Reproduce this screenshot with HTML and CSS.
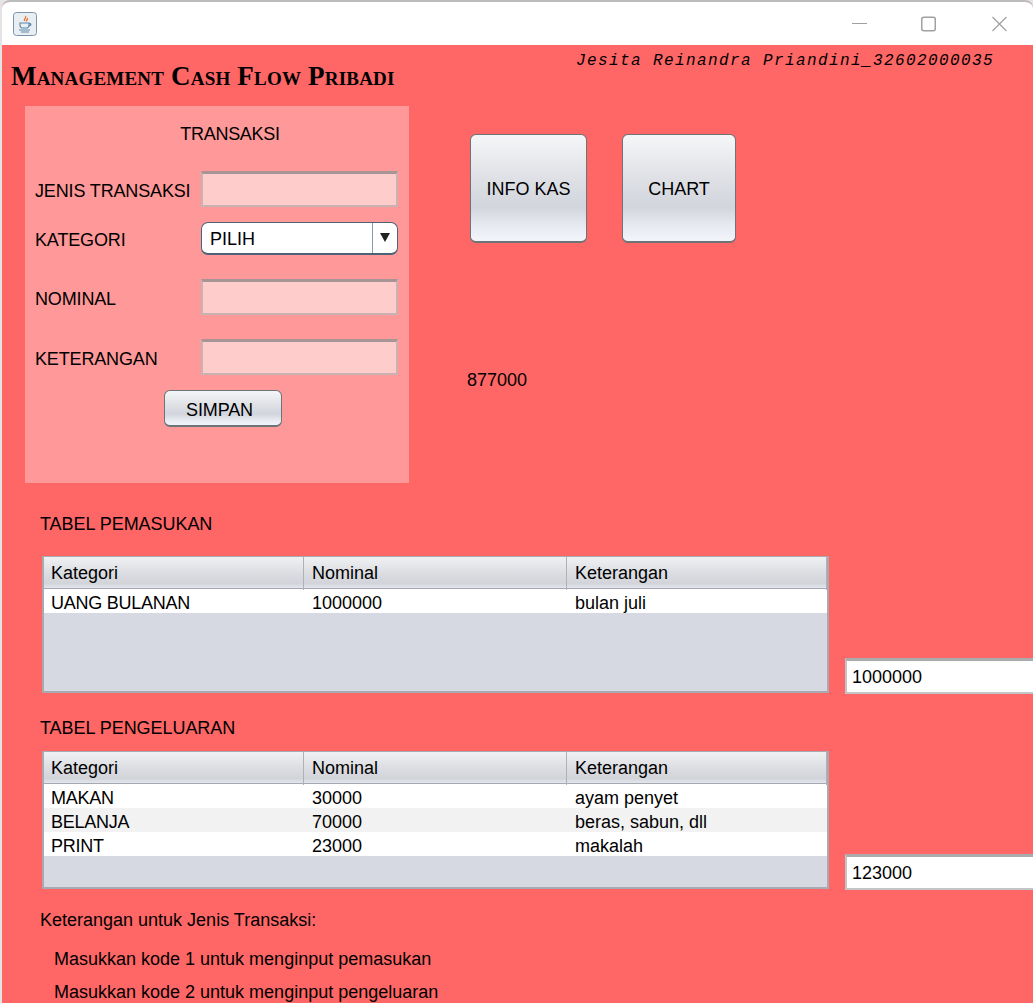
FILE: index.html
```html
<!DOCTYPE html>
<html lang="id">
<head>
<meta charset="utf-8">
<title>Management Cash Flow Pribadi</title>
<link rel="stylesheet" href="styles.css">
</head>
<body>
<div class="window">
  <div class="titlebar">
    <div class="app-icon">
      <svg width="24" height="24" viewBox="0 0 24 24">
        <rect x="0.5" y="0.5" width="23" height="23" rx="3" fill="#e9eef3" stroke="#7d95ab"/>
        <path d="M12.500 4c1.500 1.500-2 3-1 5M14.500 6c.5 1.500-1.500 2-1 3.500" fill="none" stroke="#e8762c" stroke-width="1.300"/>
        <path d="M7 11h9v2.500c0 1.500-1.500 2.500-2.500 2.500h-4c-1 0-2.500-1-2.500-2.500zM16 11.500c2.500-.5 2.500 2.500 0 2.500" fill="none" stroke="#5f87aa" stroke-width="1.200"/>
        <path d="M6 18h11M8 20h8" stroke="#5f87aa" stroke-width="1.200"/>
      </svg>
    </div>
    <div class="window-controls">
      <svg width="15" height="16" viewBox="0 0 15 16"><path d="M0 7.500h15" stroke="#a0a0a0" stroke-width="1"/></svg>
      <svg width="15" height="16" viewBox="0 0 15 16"><rect x="0.750" y="1.250" width="13.500" height="13.500" rx="2" fill="none" stroke="#a0a0a0" stroke-width="1.500"/></svg>
      <svg class="ctl-close" width="15" height="16" viewBox="0 0 15 16"><path d="M.5 1l14 14M14.500 1L.5 15" stroke="#a0a0a0" stroke-width="1.200"/></svg>
    </div>
  </div>

  <main class="content">
    <header class="page-head">
      <h1 class="page-title">Management Cash Flow Pribadi</h1>
      <div class="author">Jesita Reinandra Priandini_32602000035</div>
    </header>

    <div class="top-row">
      <section class="panel">
        <div class="panel-title">TRANSAKSI</div>
        <div class="form-row row-a"><span class="form-label">JENIS TRANSAKSI</span><div class="field"></div></div>
        <div class="form-row row-b"><span class="form-label">KATEGORI</span>
          <div class="combo"><span class="combo-value">PILIH</span><span class="combo-arrow"></span></div>
        </div>
        <div class="form-row row-c"><span class="form-label">NOMINAL</span><div class="field"></div></div>
        <div class="form-row row-c"><span class="form-label">KETERANGAN</span><div class="field"></div></div>
        <div class="btn btn-save">SIMPAN</div>
      </section>

      <div class="actions">
        <div class="action-buttons">
          <div class="btn btn-info">INFO KAS</div>
          <div class="btn btn-chart">CHART</div>
        </div>
        <div class="balance">877000</div>
      </div>
    </div>

    <div class="section-label label-in">TABEL PEMASUKAN</div>
    <div class="table-row">
      <div class="table-box box-in">
        <div class="t-head"><div>Kategori</div><div>Nominal</div><div>Keterangan</div></div>
        <div class="t-row"><div>UANG BULANAN</div><div>1000000</div><div>bulan juli</div></div>
      </div>
      <div class="total">1000000</div>
    </div>

    <div class="section-label label-out">TABEL PENGELUARAN</div>
    <div class="table-row">
      <div class="table-box box-out">
        <div class="t-head"><div>Kategori</div><div>Nominal</div><div>Keterangan</div></div>
        <div class="t-row"><div>MAKAN</div><div>30000</div><div>ayam penyet</div></div>
        <div class="t-row"><div>BELANJA</div><div>70000</div><div>beras, sabun, dll</div></div>
        <div class="t-row"><div>PRINT</div><div>23000</div><div>makalah</div></div>
      </div>
      <div class="total">123000</div>
    </div>

    <p class="note note-head">Keterangan untuk Jenis Transaksi:</p>
    <p class="note note-1">Masukkan kode 1 untuk menginput pemasukan</p>
    <p class="note note-2">Masukkan kode 2 untuk menginput pengeluaran</p>
  </main>
</div>
</body>
</html>
```

FILE: styles.css
```css
* { box-sizing: border-box; }

html, body {
  margin: 0;
  padding: 0;
  height: 1003px;
  overflow: hidden;
  background: #e4e4e4;
}

body {
  font-family: "Liberation Sans", Arial, sans-serif;
  font-size: 18px;
  line-height: 20px;
  color: #000;
}

.window {
  margin-left: 2px;
  height: 1003px;
  overflow: hidden;
  border-top: 2px solid #bcbcbc;
  border-radius: 8px 8px 0 0;
  background: #f66;
  display: flex;
  flex-direction: column;
}

.titlebar {
  height: 43px;
  flex: none;
  background: #fff;
  display: flex;
  align-items: center;
  justify-content: space-between;
  padding-left: 11px;
}

.app-icon { display: flex; }

.window-controls {
  display: flex;
  align-items: center;
  gap: 54px;
  padding-right: 26px;
}

.ctl-close { margin-left: 2px; }

.content {
  flex: 1;
  min-height: 0;
}

.page-head {
  height: 61px;
  display: flex;
  justify-content: space-between;
  align-items: flex-start;
  padding: 0 39px 0 9px;
}

.page-title {
  margin: 20px 0 0;
  font-family: "Liberation Serif", serif;
  font-variant: small-caps;
  font-weight: bold;
  font-size: 27px;
  letter-spacing: 0.2px;
  line-height: 22px;
}

.author {
  margin-top: 6px;
  font-family: "Liberation Mono", monospace;
  font-style: italic;
  font-size: 16px;
  letter-spacing: 1.400px;
  line-height: 20px;
}

.top-row { display: flex; align-items: flex-start; }

.panel {
  margin-left: 23px;
  width: 384px;
  height: 377px;
  background: #f99;
  padding-top: 18px;
}

.panel-title {
  text-align: center;
  line-height: 20px;
  width: 410px;
  letter-spacing: -0.3px;
}

.form-row {
  display: flex;
  align-items: center;
  padding-left: 10px;
}

.form-label {
  width: 166px;
  flex: none;
  padding-top: 3px;
  letter-spacing: -0.15px;
}

.row-a { margin-top: 27px; }
.row-b { margin-top: 15px; }
.row-c { margin-top: 24px; }

.field {
  width: 197px;
  height: 36px;
  background: #fcc;
  border: 2px solid #c9b2b2;
  border-top: 3px solid #a89494;
}

.combo {
  width: 197px;
  height: 33px;
  background: #fff;
  border: 1px solid #4d6276;
  border-bottom-width: 2px;
  border-radius: 7px;
  display: flex;
  align-items: center;
  justify-content: space-between;
  padding-left: 8px;
}

.combo-value { padding-top: 2px; }

.combo-arrow {
  width: 25px;
  height: 100%;
  border-left: 1px solid #8a9bab;
  position: relative;
}

.combo-arrow::after {
  content: "";
  position: absolute;
  left: 7px;
  top: 10px;
  border-left: 5.500px solid transparent;
  border-right: 5.500px solid transparent;
  border-top: 9px solid #222;
}

.btn {
  display: flex;
  align-items: center;
  justify-content: center;
  border: 1px solid #6c7478;
  border-bottom-width: 2px;
  border-radius: 6px;
  background: linear-gradient(#f5f6f8 0%, #dfe1e6 40%, #d2d5dd 68%, #e6e9f0 85%, #f3f5fb 100%);
}

.btn-save {
  margin: 15px 0 0 139px;
  width: 118px;
  height: 37px;
  padding: 3px 7px 0 0;
  letter-spacing: -0.15px;
}

.actions { margin-left: 61px; }

.action-buttons {
  display: flex;
  gap: 35px;
  padding-top: 28px;
}

.btn-info { width: 117px; height: 109px; padding-top: 2px; }
.btn-chart { width: 114px; height: 109px; padding-top: 2px; }

.balance {
  margin: 127px 0 0 -3px;
}

.section-label { margin-left: 38px; letter-spacing: -0.05px; }
.label-in { margin-top: 31px; }
.label-out { margin-top: 25px; }

.table-row {
  display: flex;
  align-items: flex-end;
  margin-left: 40px;
  gap: 16px;
}

.label-in + .table-row { margin-top: 22px; }
.label-out + .table-row { margin-top: 13px; }

.table-box {
  width: 787px;
  flex: none;
  background: #d6d9e1;
  border: 2px solid #a8aaaf;
  border-top-width: 1px;
}

.box-in { height: 137px; }
.box-out { height: 138px; }

.t-head, .t-row {
  display: grid;
  grid-template-columns: 260px 263px 1fr;
}

.t-head {
  height: 32px;
  background: linear-gradient(#f0f1f3 0%, #dcdee2 50%, #d2d4da 85%, #e3e6ed 100%);
  border-bottom: 1px solid #a5a8b0;
}

.t-head > div {
  padding-left: 7px;
  line-height: 33px;
  border-right: 1px solid #aeb1b8;
}

.t-head > div + div, .t-row > div + div { padding-left: 8px; }

.t-row {
  height: 24px;
  background: #fff;
}

.t-row:nth-child(odd) { background: #f2f2f2; }

.t-row > div {
  padding-left: 7px;
  line-height: 28px;
}

.t-row > div:first-child { letter-spacing: -0.25px; }

.total {
  flex: none;
  width: 220px;
  height: 36px;
  margin-bottom: -1px;
  background: #fff;
  border: 2px solid #c2c4c8;
  border-top: 3px solid #a9abaf;
  padding-left: 5px;
  line-height: 33px;
}

.note { margin: 0; }
.note-head { margin: 21px 0 0 38px; }
.note-1 { margin: 19px 0 0 52px; }
.note-2 { margin: 13px 0 0 52px; }
```
